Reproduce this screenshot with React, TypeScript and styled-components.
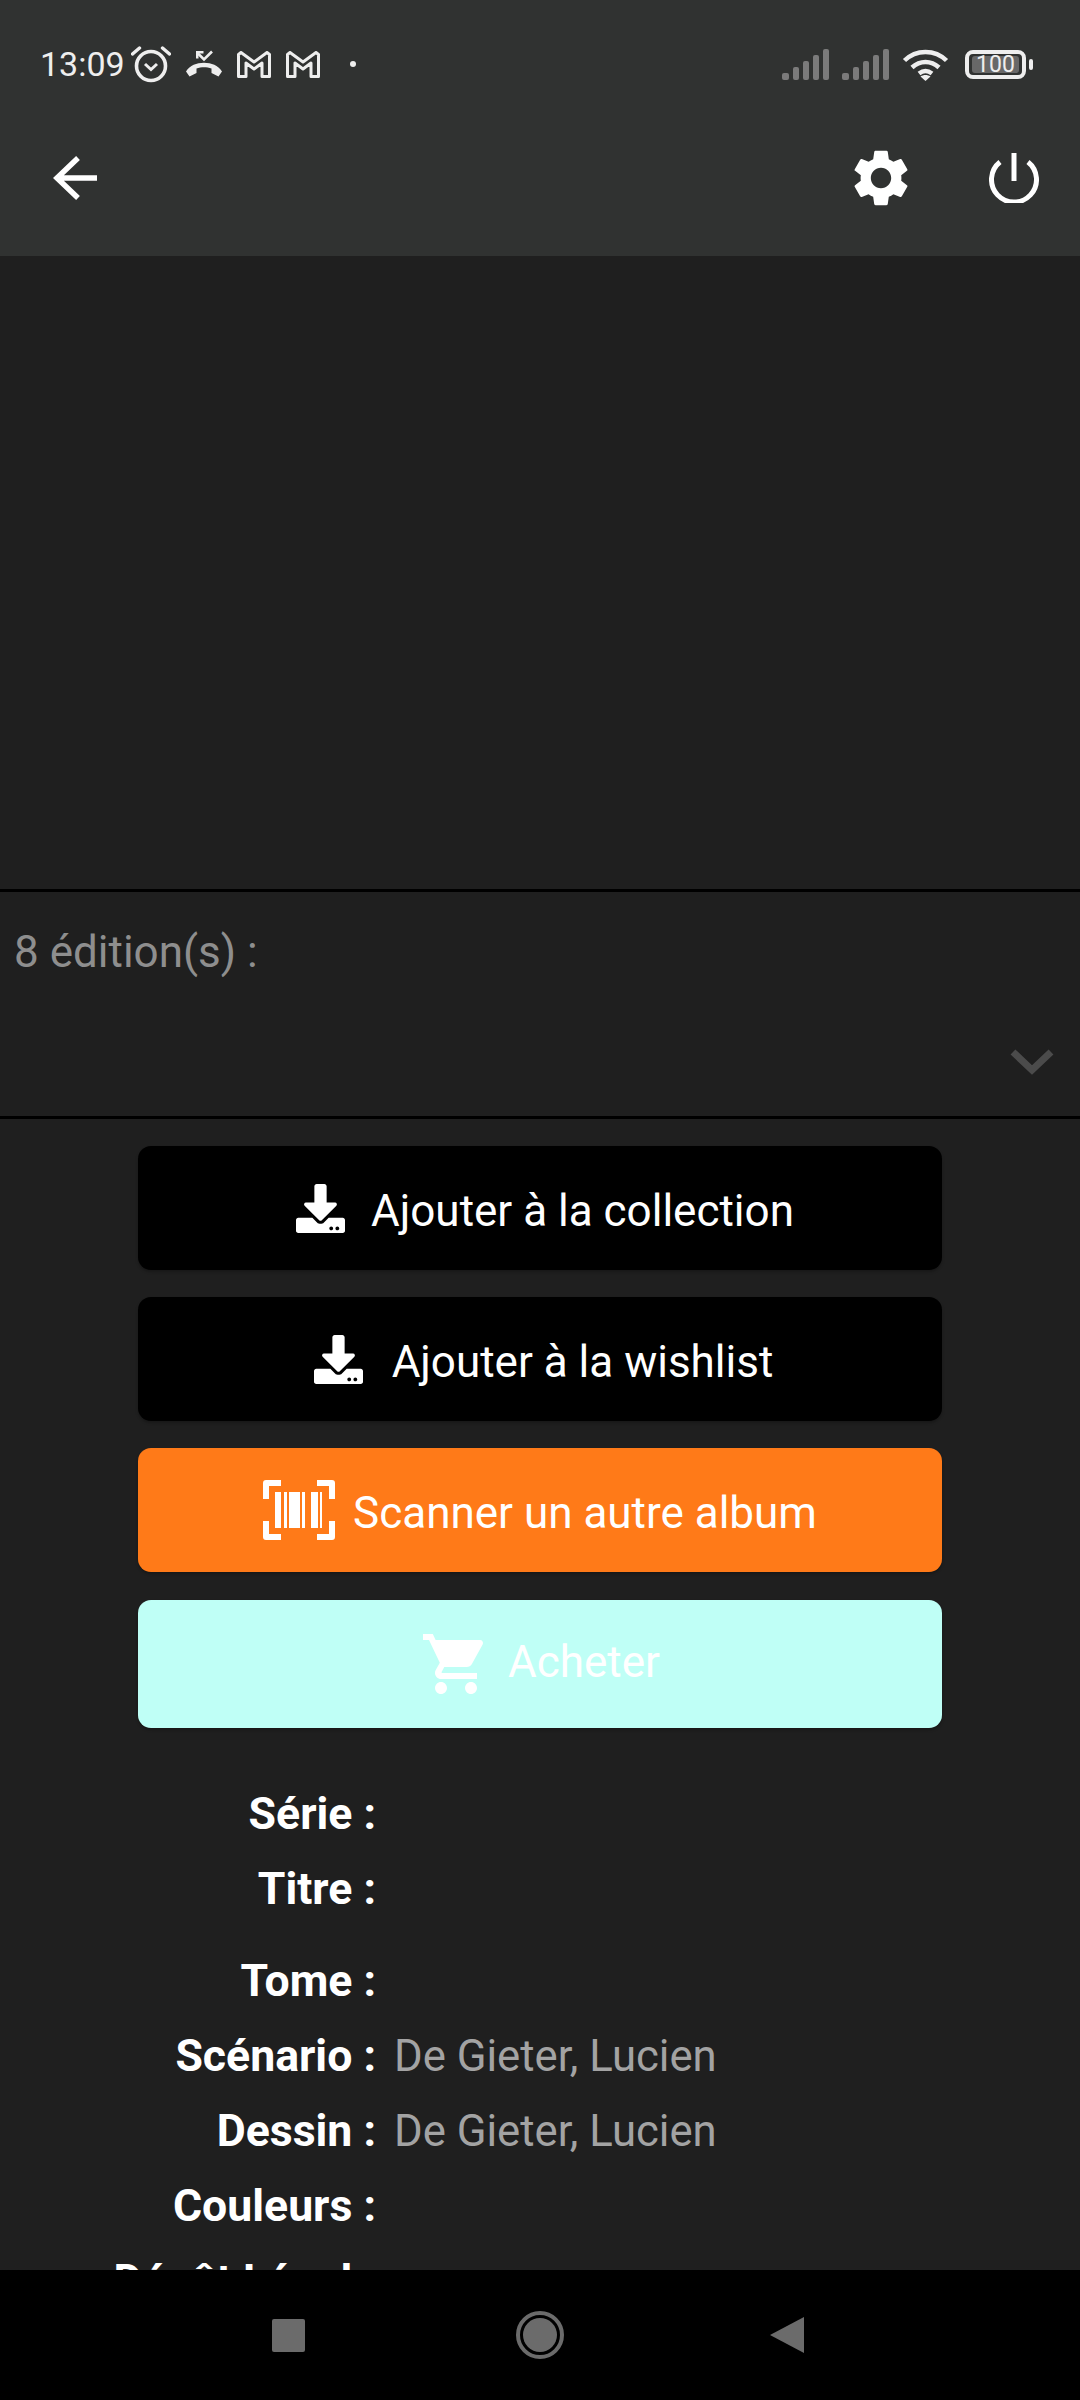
import React, { FC, ReactNode } from "react"
import styled, { createGlobalStyle } from "styled-components"
import { FaDownload } from "react-icons/fa"
import { MdSettings, MdShoppingCart } from "react-icons/md"

const GlobalStyle = createGlobalStyle`
  html, body {
    margin: 0;
    padding: 0;
    background: #1f1f1f;
  }
  * {
    box-sizing: border-box;
  }
`

const AlarmIcon = () => (
  <svg width="40" height="38" viewBox="0 0 40 38" fill="none" stroke="#eeeeee">
    <circle cx="20" cy="21" r="14.500" strokeWidth="3.600" />
    <path d="M14 19l6 5.500 6-5.500" strokeWidth="3" />
    <path d="M1.500 9L8.500 3M38.500 9L31.500 3" strokeWidth="3.400" strokeLinecap="round" />
  </svg>
)

const MissedCallIcon = () => (
  <svg width="36" height="28" viewBox="0 0 36 28" fill="#eeeeee">
    <path d="M0 21.500C4 15.500 10.500 12.800 18 12.800s14 2.700 18 8.700l-3.500 5-7-3.500v-4.500c-2.300-.8-5-1.200-7.500-1.200s-5.200.4-7.500 1.200V23l-7 3.500z" />
    <path d="M12 3.500l6 6 8-8" fill="none" stroke="#eeeeee" strokeWidth="2.600" />
    <path d="M10 1h7.500v2.600h-5v5H10z" />
  </svg>
)

const GmailIcon = () => (
  <svg width="34" height="27" viewBox="0 0 34 27" fill="none" stroke="#eeeeee" strokeWidth="3" strokeLinejoin="round">
    <path d="M1.500 25.500V3.500L4 1.500l13 9.500 13-9.500 2.500 2v22H25V12l-8 6-8-6v13.500z" />
  </svg>
)

const SignalIcon = () => (
  <svg width="48" height="31" viewBox="0 0 48 31" fill="#7b7b7b">
    <rect x="0" y="24" width="7" height="7" rx="2" />
    <rect x="11" y="18" width="6" height="13" rx="2" />
    <rect x="21" y="12" width="6" height="19" rx="2" />
    <rect x="31" y="6" width="6" height="25" rx="2" />
    <rect x="41" y="0" width="6" height="31" rx="2" />
  </svg>
)

const WifiIcon = () => (
  <svg width="47" height="33" viewBox="0 0 47 33" fill="none" stroke="#eeeeee" strokeWidth="4.500">
    <path d="M2.500 12.500C14 1 33 1 44.500 12.500" />
    <path d="M10 19.500C18 12 29 12 37 19.500" />
    <path d="M17 25.500c4-3 9-3 13 0" />
    <path d="M23.500 33l-5-4.500c3-2 7-2 10 0z" fill="#eeeeee" stroke="none" />
  </svg>
)

const BarcodeIcon = () => (
  <svg width="72" height="60" viewBox="0 0 72 60" fill="#ffffff">
    <path
      d="M18 3H3v16M54 3h15v16M18 57H3V41M54 57h15V41"
      fill="none"
      stroke="#ffffff"
      strokeWidth="6"
      strokeLinejoin="round"
    />
    <rect x="12" y="12" width="6" height="36" />
    <rect x="21" y="12" width="3" height="36" />
    <rect x="26" y="12" width="11" height="36" />
    <rect x="39" y="12" width="3" height="36" />
    <rect x="48" y="12" width="7" height="36" />
    <rect x="57" y="12" width="2" height="36" />
  </svg>
)

const ArrowIcon = () => (
  <svg width="44" height="44" viewBox="0 0 44 44" fill="none" stroke="#ffffff" strokeWidth="5.500">
    <path d="M44 22H4M25 2L4 22l21 20" />
  </svg>
)

const PowerIcon = () => (
  <svg width="50" height="50" viewBox="0 0 50 50" fill="none" stroke="#ffffff" strokeWidth="5">
    <path d="M25 0v28" />
    <path d="M11 9a22.500 22.500 0 1 0 28 0" />
  </svg>
)

const ChevronIcon = () => (
  <svg width="44" height="26" viewBox="0 0 44 26" fill="none" stroke="#4b4b4b" strokeWidth="7">
    <path d="M3 3l19 18L41 3" />
  </svg>
)

const Page = styled.div`
  display: flex;
  flex-direction: column;
  width: 1080px;
  height: 2400px;
  overflow: hidden;
  background: #1f1f1f;
  font-family: Roboto, "Liberation Sans", sans-serif;
`

const Header = styled.header`
  flex-shrink: 0;
  height: 256px;
  background: #303231;
`

const StatusBar = styled.div`
  display: flex;
  align-items: center;
  height: 128px;
  padding: 0 54px 0 40px;
  color: #eeeeee;
`

const Clock = styled.span`
  font-size: 34px;
  margin-right: 6px;
`

const StatusGroup = styled.div<{ $gap: number }>`
  display: flex;
  align-items: center;
  gap: ${(p) => p.$gap}px;
`

const NotificationDot = styled.i`
  width: 6px;
  height: 6px;
  margin-left: 30px;
  border-radius: 50%;
  background: #eeeeee;
`

const Spacer = styled.div`
  flex: 1;
`

const Battery = styled.div`
  display: flex;
  align-items: center;
  justify-content: center;
  position: relative;
  width: 61px;
  height: 29px;
  margin-left: 16px;
  border: 4px solid #eeeeee;
  border-radius: 8px;
  font-size: 23px;

  &::after {
    content: "";
    position: absolute;
    right: -11px;
    top: 5px;
    width: 4px;
    height: 11px;
    border-radius: 2px;
    background: #eeeeee;
  }
`

const BatteryLevel = styled.span`
  display: block;
  width: 47px;
  height: 17px;
  border-radius: 3px;
  background: #686868;
  line-height: 17px;
  text-align: center;
`

const Toolbar = styled.div`
  display: flex;
  align-items: center;
  height: 128px;
  padding: 0 41px 28px 53px;
`

const SettingsButton = styled(MdSettings)`
  margin-right: 74px;
  font-size: 68px;
  color: #ffffff;
`

const CoverArea = styled.div`
  flex-shrink: 0;
  height: 633px;
`

const EditionPanel = styled.section`
  flex-shrink: 0;
  display: flex;
  flex-direction: column;
  height: 230px;
  padding: 34px 26px 41px 14px;
  border-top: 3px solid #000000;
  border-bottom: 3px solid #000000;
`

const EditionLabel = styled.div`
  font-size: 44px;
  line-height: 52px;
  color: #8e8e8e;
`

const EditionChevron = styled.div`
  margin-top: auto;
  align-self: flex-end;
  line-height: 0;
`

const Actions = styled.div`
  flex-shrink: 0;
  display: flex;
  flex-direction: column;
  gap: 27px;
  width: 804px;
  margin: 27px auto 0;
`

const variants = {
  dark: { bg: "#000000", height: 124, labelPad: "5px 0 0" },
  scan: { bg: "#ff7a18", height: 124, labelPad: "5px 0 0" },
  buy: { bg: "#bffff6", height: 128, labelPad: "0 0 5px" },
}

type Variant = keyof typeof variants

const ActionButton = styled.button<{ $variant: Variant }>`
  display: flex;
  align-items: center;
  justify-content: center;
  height: ${(p) => variants[p.$variant].height}px;
  margin-top: ${(p) => (p.$variant === "buy" ? 1 : 0)}px;
  padding: 0;
  border: none;
  border-radius: 13px;
  background: ${(p) => variants[p.$variant].bg};
  box-shadow: 0 2px 3px rgba(0, 0, 0, 0.25);
  color: #ffffff;
  font-family: inherit;
  font-size: 44px;
`

const ActionLabel = styled.span<{ $variant: Variant }>`
  padding: ${(p) => variants[p.$variant].labelPad};
`

const DownloadGlyph = styled(FaDownload)<{ $tight?: boolean }>`
  width: 49px;
  height: 49px;
  margin: ${(p) => (p.$tight ? "0 26px 0 10px" : "0 29px 0 7px")};
`

const BarcodeGlyph = styled.span`
  display: flex;
  margin-right: 18px;
`

const CartGlyph = styled(MdShoppingCart)`
  width: 72px;
  height: 72px;
  margin-right: 16px;
`

const Details = styled.dl`
  flex: 1;
  min-height: 0;
  margin: 48px 0 0;
  overflow: hidden;
`

const DetailRow = styled.div<{ $spaced?: boolean }>`
  display: grid;
  grid-template-columns: 376px 1fr;
  column-gap: 18px;
  align-items: center;
  height: 75px;
  margin-top: ${(p) => (p.$spaced ? 17 : 0)}px;
`

const DetailLabel = styled.dt`
  font-size: 44.6px;
  font-weight: 700;
  text-align: right;
  color: #ffffff;
`

const DetailValue = styled.dd`
  margin: 0;
  font-size: 43.7px;
  color: #a3a3a3;
`

const NavBar = styled.nav`
  flex-shrink: 0;
  display: grid;
  grid-template-columns: 252px 252px 242px;
  align-items: center;
  justify-items: center;
  height: 130px;
  padding-left: 162px;
  background: #000000;
`

const NavSquare = styled.i`
  width: 33px;
  height: 33px;
  border-radius: 2px;
  background: #6b6b6b;
`

const NavCircle = styled.i`
  width: 34px;
  height: 34px;
  border-radius: 50%;
  background: #6b6b6b;
  outline: 4px solid #6b6b6b;
  outline-offset: 3px;
`

const NavTriangle = styled.i`
  width: 0;
  height: 0;
  border-top: 18px solid transparent;
  border-bottom: 18px solid transparent;
  border-right: 34px solid #6b6b6b;
`

const Action: FC<{ variant: Variant; icon: ReactNode; label: string }> = ({ variant, icon, label }) => (
  <ActionButton $variant={variant}>
    {icon}
    <ActionLabel $variant={variant}>{label}</ActionLabel>
  </ActionButton>
)

const details = [
  { label: "Série :" },
  { label: "Titre :" },
  { label: "Tome :", spaced: true },
  { label: "Scénario :", value: "De Gieter, Lucien" },
  { label: "Dessin :", value: "De Gieter, Lucien" },
  { label: "Couleurs :" },
  { label: "Dépôt Légal :" },
]

export default function App() {
  return (
    <Page>
      <GlobalStyle />
      <Header>
        <StatusBar>
          <Clock>13:09</Clock>
          <StatusGroup $gap={15}>
            <AlarmIcon />
            <MissedCallIcon />
            <GmailIcon />
            <GmailIcon />
          </StatusGroup>
          <NotificationDot />
          <Spacer />
          <StatusGroup $gap={12}>
            <SignalIcon />
            <SignalIcon />
            <WifiIcon />
          </StatusGroup>
          <Battery>
            <BatteryLevel>100</BatteryLevel>
          </Battery>
        </StatusBar>
        <Toolbar>
          <ArrowIcon />
          <Spacer />
          <SettingsButton />
          <PowerIcon />
        </Toolbar>
      </Header>
      <CoverArea />
      <EditionPanel>
        <EditionLabel>8 édition(s) :</EditionLabel>
        <EditionChevron>
          <ChevronIcon />
        </EditionChevron>
      </EditionPanel>
      <Actions>
        <Action variant="dark" icon={<DownloadGlyph $tight />} label="Ajouter à la collection" />
        <Action variant="dark" icon={<DownloadGlyph />} label="Ajouter à la wishlist" />
        <Action
          variant="scan"
          icon={
            <BarcodeGlyph>
              <BarcodeIcon />
            </BarcodeGlyph>
          }
          label="Scanner un autre album"
        />
        <Action variant="buy" icon={<CartGlyph />} label="Acheter" />
      </Actions>
      <Details>
        {details.map((row) => (
          <DetailRow key={row.label} $spaced={row.spaced}>
            <DetailLabel>{row.label}</DetailLabel>
            <DetailValue>{row.value}</DetailValue>
          </DetailRow>
        ))}
      </Details>
      <NavBar>
        <NavSquare />
        <NavCircle />
        <NavTriangle />
      </NavBar>
    </Page>
  )
}
